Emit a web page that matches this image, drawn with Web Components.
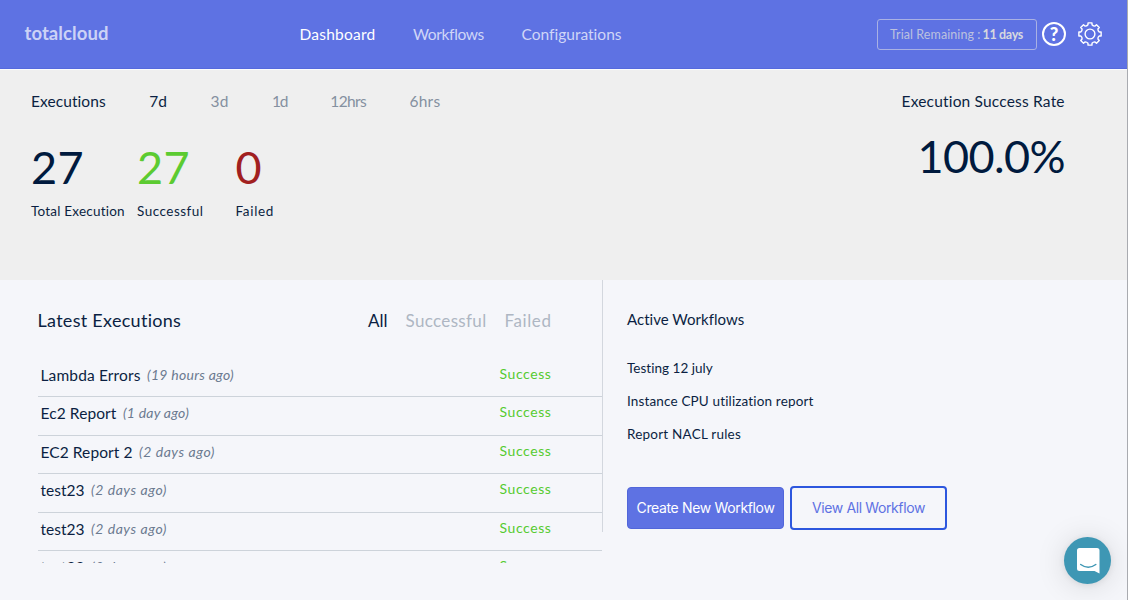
<!DOCTYPE html>
<html lang="en">
<head>
<meta charset="utf-8">
<title>TotalCloud Dashboard</title>
<style>
  html, body {
    margin: 0;
    height: 100%;
    overflow: hidden;
  }

  body {
    font-family: Lato, "Liberation Sans", sans-serif;
    color: #0b1f42;
    background: #f5f6fa;
  }
</style>
</head>
<body>
<dashboard-app></dashboard-app>

<script>
const define = (name, html, setup) => {
  const template = document.createElement("template");
  template.innerHTML = html;
  customElements.define(name, class extends HTMLElement {
    connectedCallback() {
      if (this.shadowRoot) return;
      const root = this.attachShadow({ mode: "open" });
      root.appendChild(template.content.cloneNode(true));
      if (setup) setup(this, root);
    }
  });
};

// One line of text, tracked so that it fills the given width
define("tracked-text", `
  <style>
    :host { display: block; white-space: nowrap; flex: none; }
    span { display: inline-block; }
  </style>
  <span><slot></slot></span>
`, (host, root) => {
  const width = Number(host.getAttribute("width"));
  const span = root.querySelector("span");
  const natural = span.getBoundingClientRect().width;
  host.style.width = width + "px";
  span.style.letterSpacing = (width - natural) / host.textContent.length + "px";
});

define("help-icon", `
  <style>
    :host { display: block; width: 24px; height: 24px; box-sizing: border-box; border: 2px solid #fff; border-radius: 50%;
      font: 900 18.5px/20px Lato, sans-serif; color: #fff; text-align: center; }
  </style>
  ?
`);

define("gear-icon", `
  <style>
    :host { display: block; width: 26px; height: 26px; }
    svg { display: block; }
  </style>
  <svg width="26" height="26" viewBox="-13 -13 26 26" fill="none" stroke="#fff" stroke-width="1.4" stroke-linejoin="round">
    <path></path>
    <circle r="4.9"></circle>
  </svg>
`, (host, root) => {
  // eight teeth, 45 degrees apart, joined by shallow curved valleys
  const at = (r, deg) => {
    const a = deg * Math.PI / 180;
    return (r * Math.cos(a)).toFixed(2) + " " + (r * Math.sin(a)).toFixed(2);
  };
  let d = "";
  for (let i = 0; i < 8; i++) {
    const a = i * 45;
    d += (i ? "L" : "M") + at(9.4, a - 12.5) + "L" + at(11.3, a - 10) + "L" + at(11.3, a + 10) + "L" + at(9.4, a + 12.5);
    d += "Q" + at(8.4, a + 22.5) + " " + at(9.4, a + 32.5);
  }
  root.querySelector("path").setAttribute("d", d + "Z");
});

define("top-bar", `
  <style>
    :host { display: flex; height: 69px; box-sizing: border-box; padding-left: 24.5px; background: #5e72e3; color: #fff; align-items: flex-start; border-bottom: 1px solid #5569dd; }
    .logo { margin-top: 23px; font-size: 18.5px; line-height: 20px; font-weight: 700; color: #ccd2f6; }
    nav { display: flex; margin: 24px 0 0 191px; font-size: 15.5px; line-height: 20px; color: #d0d6f7; gap: 37.5px; }
    .on { color: #fff; }
    .tools { display: flex; margin: 19px 24px 0 auto; }
    .trial { display: flex; box-sizing: border-box; width: 160px; height: 31px; border: 1px solid #a9b1e4; border-radius: 3px;
      padding-left: 12px; gap: 2px; font-size: 12.5px; line-height: 29px; color: #bcc1df; }
    .trial .days { font-weight: 700; color: #d6d8df; }
    help-icon { margin: 3px 0 0 5px; }
    gear-icon { margin: 2px 0 0 11px; }
  </style>
  <tracked-text class="logo" width="84">totalcloud</tracked-text>
  <nav>
    <tracked-text class="on" width="76">Dashboard</tracked-text>
    <tracked-text width="71">Workflows</tracked-text>
    <tracked-text width="100">Configurations</tracked-text>
  </nav>
  <div class="tools">
    <div class="trial">
      <tracked-text width="90.5">Trial Remaining :</tracked-text>
      <tracked-text class="days" width="40.5">11 days</tracked-text>
    </div>
    <help-icon></help-icon>
    <gear-icon></gear-icon>
  </div>
`);

define("stat-figure", `
  <style>
    :host { display: block; flex: none; }
    .value { font-size: 45px; line-height: 54px; color: var(--figure, #001a3e); }
    .label { font-size: 13.5px; line-height: 18px; margin-top: 8px; }
  </style>
  <div class="value"><slot name="value"></slot></div>
  <div class="label"><slot></slot></div>
`);

define("execution-stats", `
  <style>
    :host { display: flex; justify-content: space-between; height: 211px; box-sizing: border-box; padding: 21px 62px 0 31px;
      border-top: 1px solid #fbfbfd; background: #efefef; }
    .ranges { display: flex; font-size: 15.5px; line-height: 20px; color: #8490a0; }
    .ranges tracked-text { margin-right: 43.2px; }
    .ranges .on { color: #0b1f42; }
    .figures { display: flex; margin-top: 29px; }
    .rate { display: flex; flex-direction: column; align-items: flex-end; font-size: 15.5px; line-height: 20px; }
    .percent { font-size: 45px; line-height: 54px; margin-top: 18px; color: #001a3e; }
  </style>
  <div>
    <div class="ranges">
      <tracked-text class="on" width="75">Executions</tracked-text>
      <tracked-text class="on" width="18">7d</tracked-text>
      <tracked-text width="18.5">3d</tracked-text>
      <tracked-text width="15">1d</tracked-text>
      <tracked-text width="36">12hrs</tracked-text>
      <tracked-text width="31">6hrs</tracked-text>
    </div>
    <div class="figures">
      <stat-figure>
        <tracked-text slot="value" width="53">27</tracked-text>
        <tracked-text class="label" width="94">Total Execution</tracked-text>
      </stat-figure>
      <stat-figure style="--figure: #5ccb31; margin-left: 12px">
        <tracked-text slot="value" width="53">27</tracked-text>
        <tracked-text class="label" width="66.5">Successful</tracked-text>
      </stat-figure>
      <stat-figure style="--figure: #a1201f; margin-left: 32px">
        <tracked-text slot="value" width="30">0</tracked-text>
        <tracked-text class="label" width="38.5">Failed</tracked-text>
      </stat-figure>
    </div>
  </div>
  <div class="rate">
    <tracked-text width="163.5">Execution Success Rate</tracked-text>
    <tracked-text class="percent" width="147.5">100.0%</tracked-text>
  </div>
`);

define("execution-row", `
  <style>
    :host { display: flex; justify-content: space-between; height: 38.4px; box-sizing: border-box; padding: 6px 50px 0 3px; border-bottom: 1px solid #cdd3da; }
    .name { display: flex; gap: 6.5px; font-size: 15.5px; line-height: 20px; }
    .ago { font-size: 14px; font-style: italic; color: #6b7a90; }
    .state { font-size: 14px; line-height: 17px; color: #56cb30; }
  </style>
  <div class="name">
    <slot></slot>
    <slot name="ago" class="ago"></slot>
  </div>
  <tracked-text class="state" width="52">Success</tracked-text>
`);

define("latest-executions", `
  <style>
    :host { display: block; width: 601.5px; flex: none; box-sizing: border-box; padding: 30px 0 0 37.5px; }
    .head { display: flex; line-height: 22px; font-size: 17px; color: #aeb6c3; padding-right: 50px; }
    .title { font-size: 18px; line-height: 21px; color: #0b1f42; margin-right: auto; }
    .head .on { color: #0b1f42; }
    .head tracked-text + tracked-text { margin-left: 18px; }
    .list { height: 204px; margin-top: 27px; overflow: hidden; }
  </style>
  <div class="head">
    <tracked-text class="title" width="144">Latest Executions</tracked-text>
    <tracked-text class="on" width="19.5">All</tracked-text>
    <tracked-text width="81">Successful</tracked-text>
    <tracked-text width="47">Failed</tracked-text>
  </div>
  <div class="list"></div>
`, (host, root) => {
  const runs = [
    ["Lambda Errors", 100, "(19 hours ago)", 87],
    ["Ec2 Report", 76, "(1 day ago)", 66],
    ["EC2 Report 2", 92, "(2 days ago)", 76],
    ["test23", 44, "(2 days ago)", 76],
    ["test23", 44, "(2 days ago)", 76],
    ["test23", 44, "(2 days ago)", 76],
  ];
  root.querySelector(".list").innerHTML = runs.map(([name, w, ago, agoW]) => `
    <execution-row>
      <tracked-text width="${w}">${name}</tracked-text>
      <tracked-text slot="ago" width="${agoW}">${ago}</tracked-text>
    </execution-row>`).join("");
});

define("flow-button", `
  <style>
    :host { display: block; flex: none; }
    button { display: flex; justify-content: center; align-items: center; box-sizing: border-box; width: 157px; height: 42px; padding: 0; border: 1px solid #5166da;
      border-radius: 4px; background: #5e72e3; color: #fff; font: 14px/20px Inter, "Liberation Sans", sans-serif; }
    :host([outline]) button { height: 44px; border: 2px solid #2d57de; background: none; color: #5e72e3; }
  </style>
  <button><slot></slot></button>
`);

define("active-workflows", `
  <style>
    :host { display: block; flex: 1; padding: 29px 0 0 25.5px; }
    .title { font-size: 15px; line-height: 20px; margin-bottom: 29px; }
    .item { font-size: 13.5px; line-height: 20px; margin-bottom: 13px; }
    .actions { display: flex; align-items: center; gap: 6px; margin-top: 42px; }
  </style>
  <tracked-text class="title" width="117.5">Active Workflows</tracked-text>
  <tracked-text class="item" width="86">Testing 12 july</tracked-text>
  <tracked-text class="item" width="187">Instance CPU utilization report</tracked-text>
  <tracked-text class="item" width="114">Report NACL rules</tracked-text>
  <div class="actions">
    <flow-button><tracked-text width="138">Create New Workflow</tracked-text></flow-button>
    <flow-button outline><tracked-text width="113">View All Workflow</tracked-text></flow-button>
  </div>
`);

define("chat-launcher", `
  <style>
    :host { position: absolute; right: 16px; bottom: 16px; width: 47px; height: 47px; border-radius: 50%; background: #3e97b4;
      box-shadow: 0 1px 6px rgba(0, 0, 0, .08), 0 2px 30px rgba(0, 0, 0, .13); }
    svg { display: block; margin: 11px 0 0 13px; }
  </style>
  <svg width="23" height="26" viewBox="0 0 23 26">
    <path d="M2.5 0h17.5a2.5 2.5 0 0 1 2.5 2.5V25.5L17.5 23H2.5A2.5 2.5 0 0 1 0 20.5V2.5A2.5 2.5 0 0 1 2.5 0Z" fill="#fff"></path>
    <path d="M3.7 16.5Q11.25 22 18.8 16.5" fill="none" stroke="#3e97b4" stroke-width="1.5" stroke-linecap="round"></path>
  </svg>
`);

define("dashboard-app", `
  <style>
    :host { display: block; position: relative; width: 1128px; height: 600px; box-sizing: border-box; border-right: 1px solid #a9abb0; overflow: hidden; }
    main { display: flex; }
    .divider { width: 1px; height: 252px; background: #d3d7de; flex: none; margin-right: -1px; }
  </style>
  <top-bar></top-bar>
  <execution-stats></execution-stats>
  <main>
    <latest-executions></latest-executions>
    <div class="divider"></div>
    <active-workflows></active-workflows>
  </main>
  <chat-launcher></chat-launcher>
`);
</script>
</body>
</html>
